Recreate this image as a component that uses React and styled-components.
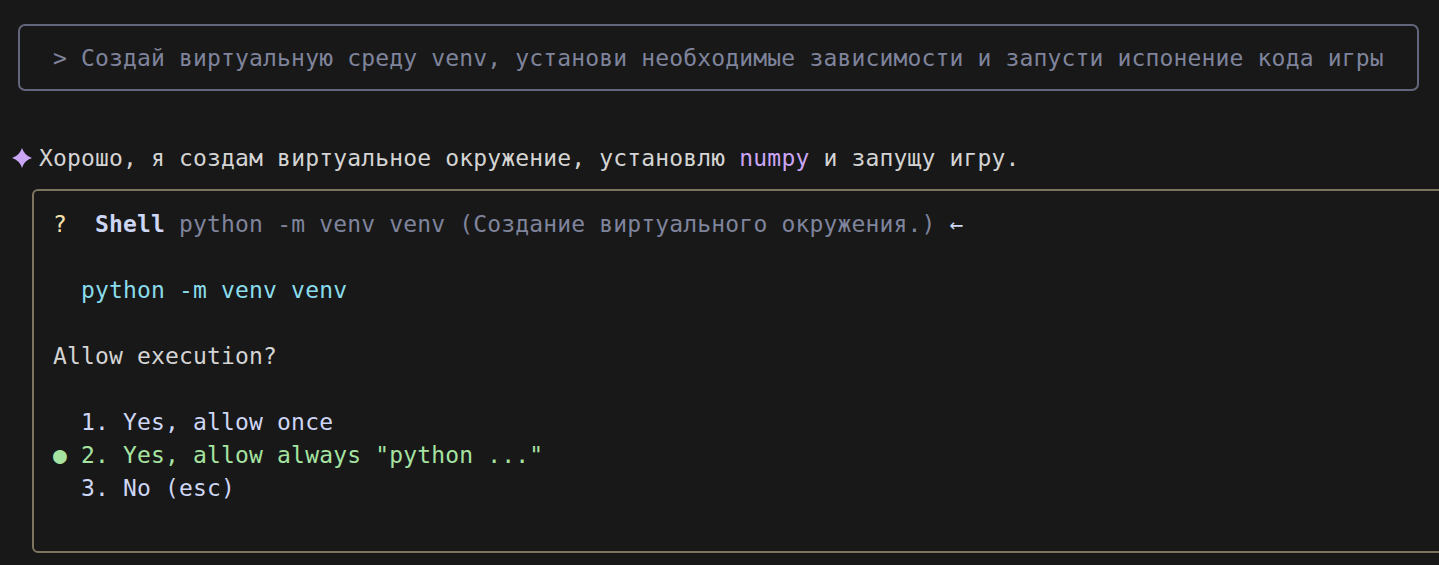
import styled, { createGlobalStyle } from 'styled-components';

const GlobalStyle = createGlobalStyle`
  html, body {
    margin: 0;
    padding: 0;
    height: 100%;
    overflow: hidden;
    background-color: #181818;
  }
`;

const Terminal = styled.div`
  width: 1439px;
  height: 565px;
  overflow: hidden;
  padding-top: 24px;
  box-sizing: border-box;
  font-family: 'DejaVu Sans Mono', monospace;
  font-size: 23px;
  letter-spacing: 0.16px;
  line-height: 33px;
  color: #d4d4d4;
  white-space: pre;
`;

const PromptBox = styled.div`
  margin-left: 18px;
  width: 1401px;
  height: 67px;
  box-sizing: border-box;
  display: flex;
  align-items: center;
  padding-left: 33px;
  padding-top: 2px;
  border: 2px solid #63657c;
  border-radius: 7px;
  color: #7f849c;
`;

const Message = styled.div`
  margin-top: 51px;
  padding-left: 12px;
  display: flex;
  align-items: center;
  gap: 7px;
`;

const Star = styled.svg`
  width: 20px;
  height: 20px;
  flex: none;
  margin-bottom: 2px;
`;

const Panel = styled.div`
  margin: 14px 0 0 32px;
  width: 1500px;
  height: 364px;
  box-sizing: border-box;
  padding: 17px 0 0 19px;
  border: 2px solid #7d7460;
  border-radius: 6px;
`;

const Line = styled.div`
  height: 33px;
`;

const Gap = styled.div`
  height: 33px;
`;

const Tone = styled.span`
  color: ${(p) => p.$color};
  font-weight: ${(p) => (p.$bold ? 700 : 400)};
`;

const App = () => {
  return (
    <>
      <GlobalStyle />
      <Terminal>
        <PromptBox>&gt; Создай виртуальную среду venv, установи необходимые зависимости и запусти испонение кода игры</PromptBox>
        <Message>
          <Star viewBox="0 0 20 20">
            <path d="M10 0 Q12.4 7.6 20 10 Q12.4 12.4 10 20 Q7.6 12.4 0 10 Q7.6 7.6 10 0 Z" fill="#cba6f7" />
          </Star>
          <span>
            Хорошо, я создам виртуальное окружение, установлю <Tone $color="#cba6f7">numpy</Tone> и запущу игру.
          </span>
        </Message>
        <Panel>
          <Line>
            <Tone $color="#f9e2af">?</Tone>
            {'  '}
            <Tone $color="#cdd6f4" $bold>Shell</Tone>
            <Tone $color="#7f849c"> python -m venv venv (Создание виртуального окружения.)</Tone>
            <Tone $color="#cdd6f4"> ←</Tone>
          </Line>
          <Gap />
          <Line>
            <Tone $color="#89dceb">  python -m venv venv</Tone>
          </Line>
          <Gap />
          <Line>Allow execution?</Line>
          <Gap />
          <Line>
            <Tone $color="#cdd6f4">  1. Yes, allow once</Tone>
          </Line>
          <Line>
            <Tone $color="#a6e3a1">● 2. Yes, allow always "python ..."</Tone>
          </Line>
          <Line>
            <Tone $color="#cdd6f4">  3. No (esc)</Tone>
          </Line>
        </Panel>
      </Terminal>
    </>
  );
};

export default App;
